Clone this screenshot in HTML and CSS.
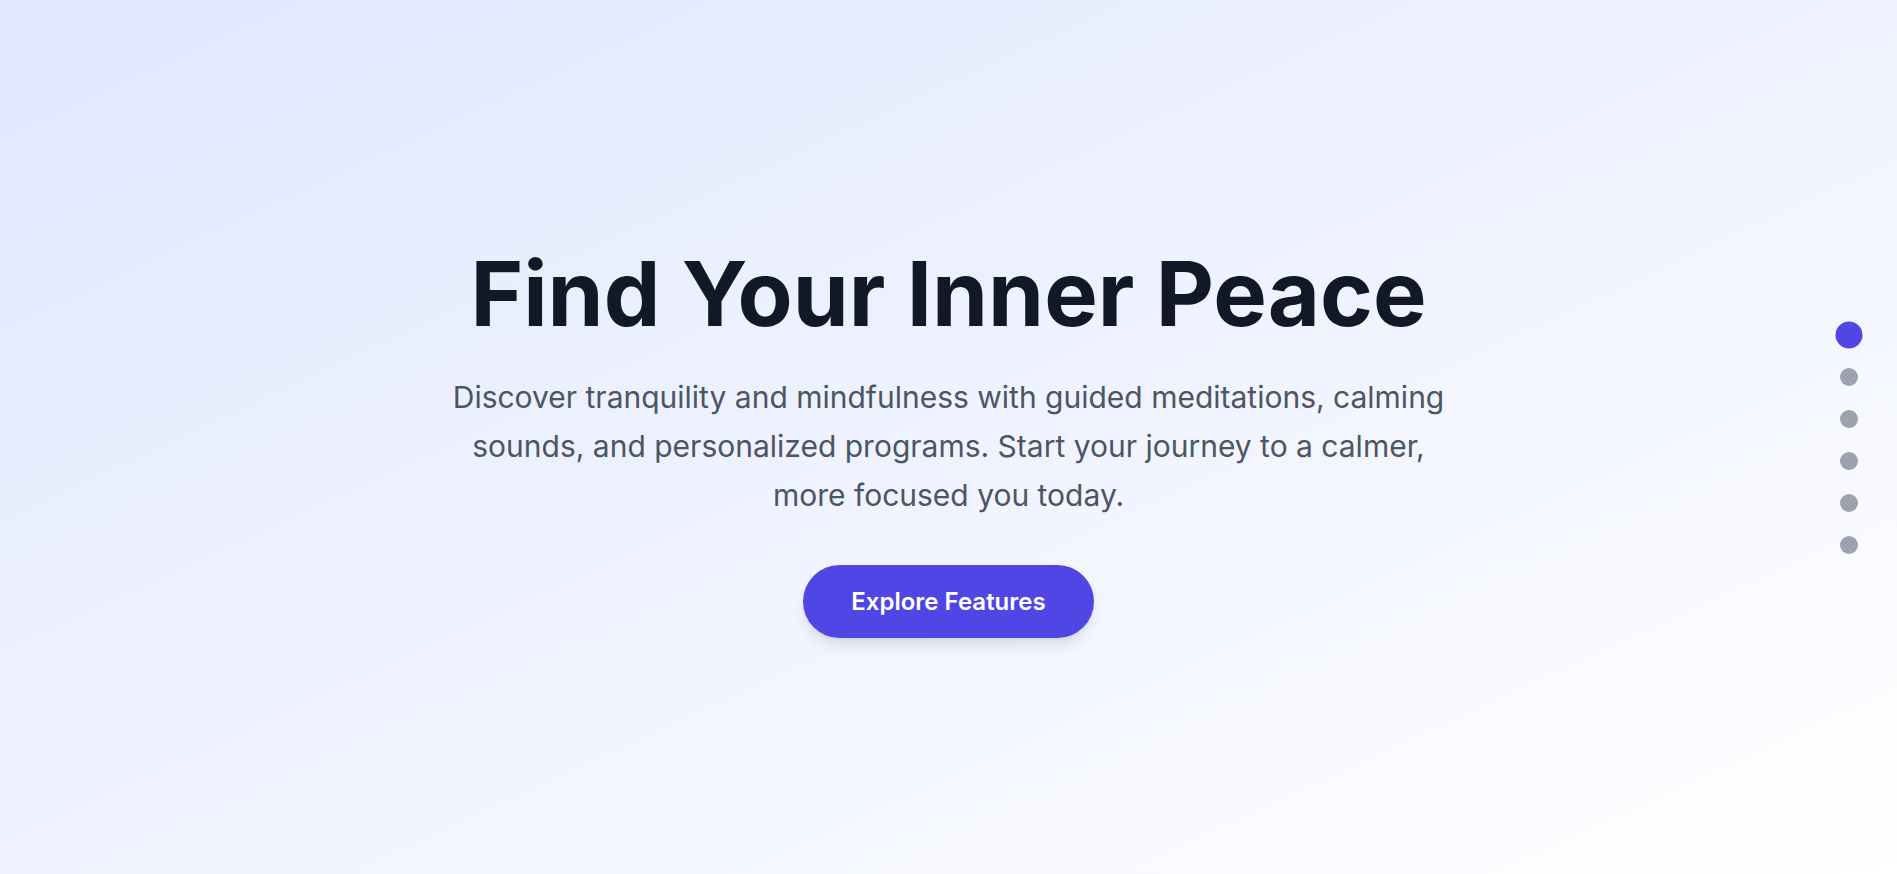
FILE: index.html
```html
<!DOCTYPE html>
<html lang="en">
<head>
<meta charset="utf-8">
<title>Find Your Inner Peace</title>
<link rel="stylesheet" href="styles.css">
</head>
<body>
<section class="hero">
  <div class="hero-content">
    <h1 class="hero-title">Find Your Inner Peace</h1>
    <p class="hero-text">Discover tranquility and mindfulness with guided meditations, calming sounds, and personalized programs. Start your journey to a calmer, more focused you today.</p>
    <a class="hero-button" href="#features">Explore Features</a>
  </div>
</section>
<nav class="dot-nav">
  <span class="dot dot-active"></span>
  <span class="dot"></span>
  <span class="dot"></span>
  <span class="dot"></span>
  <span class="dot"></span>
  <span class="dot"></span>
</nav>
</body>
</html>
```

FILE: styles.css
```css
* { box-sizing: border-box; }
html, body { margin: 0; padding: 0; }
body {
  font-family: Inter, "Noto Sans", "Liberation Sans", sans-serif;
  overflow: hidden;
}
.hero {
  height: 100vh;
  display: flex;
  align-items: center;
  justify-content: center;
  padding-top: 13px;
  background: linear-gradient(to bottom right, #e0e7ff, #ffffff);
}
.hero-content {
  display: flex;
  flex-direction: column;
  align-items: center;
  text-align: center;
}
.hero-title {
  margin: 0 0 34px;
  font-size: 90px;
  line-height: 1;
  font-weight: 700;
  color: #111827;
}
.hero-text {
  margin: 0 0 45px;
  max-width: 1024px;
  font-size: 30px;
  line-height: 1.625;
  color: #4b5563;
}
.hero-button {
  display: inline-block;
  padding: 20px 48px;
  border-radius: 9999px;
  background: #4f46e5;
  color: #ffffff;
  font-size: 24px;
  line-height: 33px;
  font-weight: 600;
  text-decoration: none;
  box-shadow: 0 10px 15px -3px rgba(0,0,0,0.1), 0 4px 6px -4px rgba(0,0,0,0.1);
}
.dot-nav {
  position: fixed;
  right: 39px;
  top: 50%;
  transform: translateY(-50%);
  margin-top: 3px;
  display: flex;
  flex-direction: column;
  gap: 24px;
}
.dot {
  display: block;
  width: 18px;
  height: 18px;
  border-radius: 50%;
  background: #9ca3af;
}
.dot-active {
  background: #4f46e5;
  transform: scale(1.5);
}
```
